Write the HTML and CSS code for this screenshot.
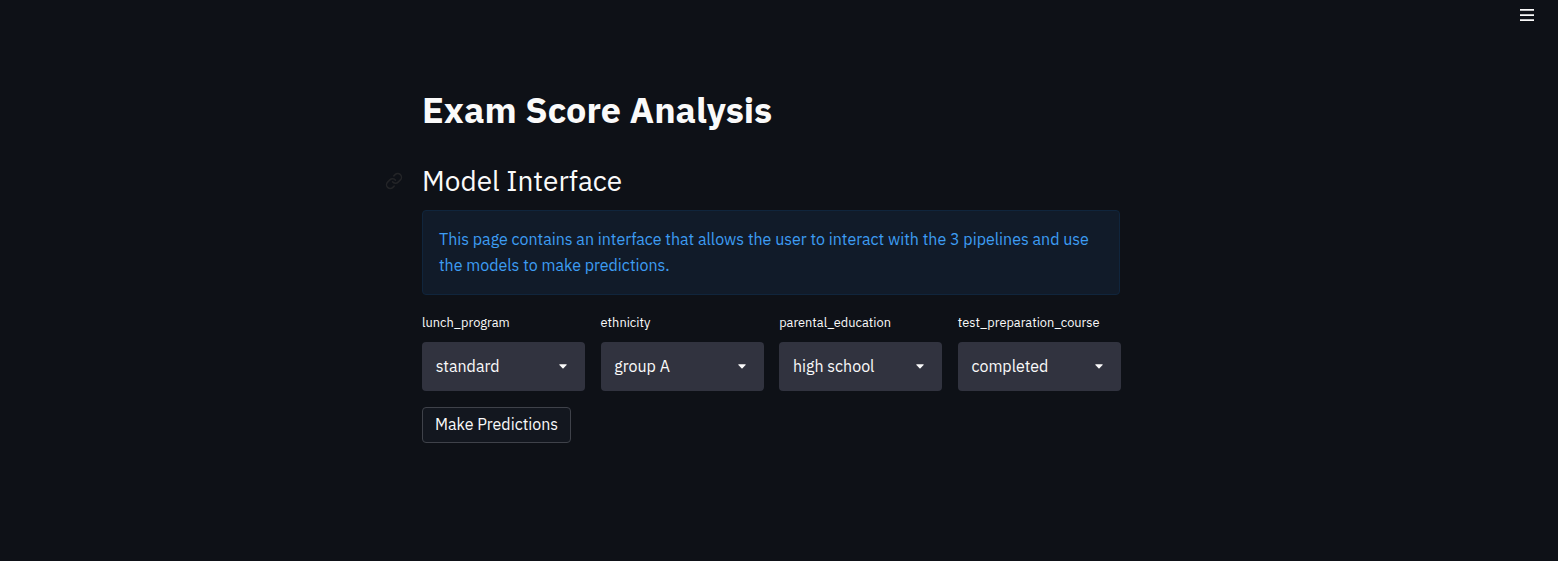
FILE: index.html
```html
<!DOCTYPE html>
<html lang="en">
<head>
<meta charset="utf-8">
<title>Exam Score Analysis</title>
<link rel="stylesheet" href="styles.css">
</head>
<body>
<header class="toolbar">
  <svg class="menu-icon" viewBox="0 0 14 14" width="14" height="14"><path d="M0 1.9h14M0 7.1h14M0 12.1h14" stroke="#fafafa" stroke-width="1.8"/></svg>
</header>
<main class="content">
  <h1 class="title">Exam Score Analysis</h1>
  <div class="heading">
    <svg class="anchor" viewBox="0 0 24 24" width="18" height="18" fill="none" stroke="#232427" stroke-width="2" stroke-linecap="round" stroke-linejoin="round"><path d="M10 13a5 5 0 0 0 7.54.54l3-3a5 5 0 0 0-7.07-7.07l-1.72 1.71"/><path d="M14 11a5 5 0 0 0-7.54-.54l-3 3a5 5 0 0 0 7.07 7.07l1.71-1.71"/></svg>
    <h2 class="subtitle">Model Interface</h2>
  </div>
  <div class="info"><p class="info-text">This page contains an interface that allows the user to interact with the 3 pipelines and use<br>the models to make predictions.</p></div>
  <div class="fields">
    <div class="field"><label class="label">lunch_program</label><div class="select"><span class="value">standard</span><svg class="caret" viewBox="0 0 8 5" width="8" height="5"><path d="M.6 .3h6.8q.5 .3 .2 .8L4.5 4.3q-.5 .4-1 0L.4 1.1Q.1 .6 .6 .3z"/></svg></div></div>
    <div class="field"><label class="label">ethnicity</label><div class="select"><span class="value">group A</span><svg class="caret" viewBox="0 0 8 5" width="8" height="5"><path d="M.6 .3h6.8q.5 .3 .2 .8L4.5 4.3q-.5 .4-1 0L.4 1.1Q.1 .6 .6 .3z"/></svg></div></div>
    <div class="field"><label class="label">parental_education</label><div class="select"><span class="value">high school</span><svg class="caret" viewBox="0 0 8 5" width="8" height="5"><path d="M.6 .3h6.8q.5 .3 .2 .8L4.5 4.3q-.5 .4-1 0L.4 1.1Q.1 .6 .6 .3z"/></svg></div></div>
    <div class="field"><label class="label">test_preparation_course</label><div class="select"><span class="value">completed</span><svg class="caret" viewBox="0 0 8 5" width="8" height="5"><path d="M.6 .3h6.8q.5 .3 .2 .8L4.5 4.3q-.5 .4-1 0L.4 1.1Q.1 .6 .6 .3z"/></svg></div></div>
  </div>
  <button class="predict" type="button">Make Predictions</button>
</main>
</body>
</html>
```
FILE: styles.css
```css
* { box-sizing: border-box; }
html, body { margin: 0; height: 100%; }
body {
  background: #0e1117;
  color: #fafafa;
  font-family: "IBM Plex Sans", "Open Sans", sans-serif;
  font-size: 16px;
  overflow: hidden;
}
.toolbar { height: 86px; display: flex; justify-content: flex-end; align-items: flex-start; padding: 8px 24px 0 0; }
.menu-icon { display: block; }
.content { width: 699px; margin-left: 422px; }
.title { margin: 0; height: 48px; line-height: 48px; font-size: 36px; font-weight: 700; white-space: nowrap; }
.heading { display: flex; align-items: center; margin: 30px 0 0 -37px; height: 34px; gap: 19px; }
.anchor { flex: none; }
.subtitle { margin: 0; font-size: 28px; font-weight: 400; line-height: 34px; white-space: nowrap; }
.info {
  margin-top: 12px; width: 698px; height: 85px; padding: 16px;
  border: 1px solid #10253c; border-radius: 4px; background: #111b29; color: #3d9df3;
}
.info-text { margin: 0; line-height: 25.6px; white-space: nowrap; }
.fields { display: grid; grid-template-columns: repeat(4, 163px); gap: 15.6px; margin-top: 18px; }
.label { display: block; height: 20px; line-height: 20px; margin-bottom: 9px; font-size: 12.8px; white-space: nowrap; }
.select {
  height: 49px; border-radius: 4px; background: #31333f;
  display: flex; align-items: center; justify-content: space-between; padding: 0 18px 0 13.7px;
}
.value { white-space: nowrap; padding-bottom: 2px; }
.caret { fill: #fafafa; flex: none; }
.predict {
  display: block; margin-top: 16px; width: 149px; height: 36px; padding: 0 0 2px 12px; text-align: left;
  border: 1px solid #3f424a; border-radius: 4px; background: #13171f; color: #fafafa;
  font: inherit; white-space: nowrap;
}
```
